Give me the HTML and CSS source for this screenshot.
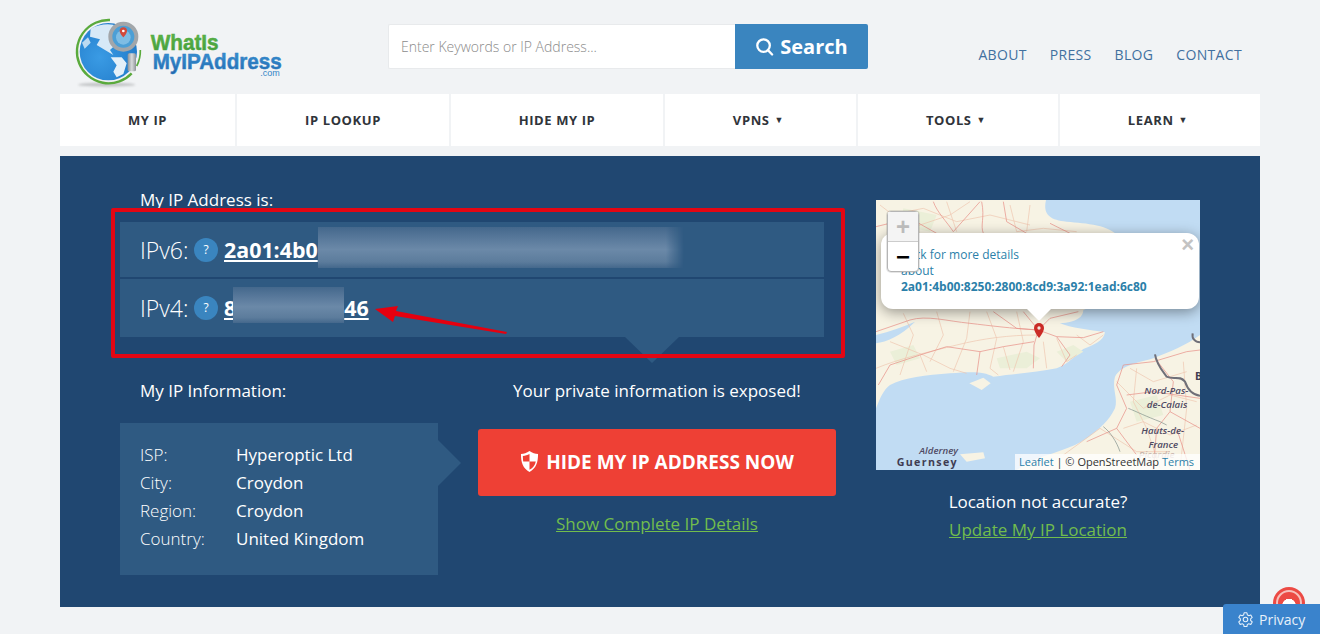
FILE: index.html
```html
<!DOCTYPE html>
<html lang="en">
<head>
<meta charset="utf-8">
<title>What Is My IP Address</title>
<link rel="stylesheet" href="styles.css">
</head>
<body>
<div class="page">
  <header class="header">
    <a class="logo" href="#" aria-label="WhatIsMyIPAddress.com">
      <svg class="logo-svg" viewBox="0 0 690 282">
        <defs>
          <radialGradient id="globe" cx="35%" cy="60%" r="75%"><stop offset="0" stop-color="#3a9be4"/><stop offset="1" stop-color="#2079c8"/></radialGradient>
          <linearGradient id="blueText" x1="0" y1="0" x2="0" y2="1"><stop offset="0" stop-color="#3b95d6"/><stop offset="1" stop-color="#2268ae"/></linearGradient>
          <linearGradient id="greenText" x1="0" y1="0" x2="0" y2="1"><stop offset="0" stop-color="#62b84a"/><stop offset="1" stop-color="#3f9a3c"/></linearGradient>
          <linearGradient id="metal" x1="0" y1="0" x2="1" y2="0"><stop offset="0" stop-color="#8d9297"/><stop offset=".5" stop-color="#d8dadc"/><stop offset="1" stop-color="#8d9297"/></linearGradient>
        </defs>
        <ellipse class="logo-shadow" cx="140" cy="254" rx="86" ry="6"/>
        <path d="M150 60 A95 95 0 1 0 215 220" fill="none" stroke="#5aaa3c" stroke-width="7"/>
        <path d="M241 150 A96 96 0 0 1 230 198" fill="none" stroke="#5aaa3c" stroke-width="5"/>
        <circle cx="145" cy="155" r="86" fill="url(#globe)"/>
        <path d="M92 86 C110 74 140 70 160 74 L182 120 L150 150 L160 165 L135 150 L110 135 L120 118 L90 110 Z" fill="#d7e9f7"/>
        <path d="M152 172 L185 172 L200 190 L190 222 L170 232 L160 215 L170 196 Z" fill="#e4f0f9"/>
        <path d="M66 128 L84 112 L92 128 L74 146 Z" fill="#bcdaf1"/>
        <circle cx="190" cy="110" r="39" fill="#4c9fd6" stroke="#a2a6aa" stroke-width="12"/>
        <circle cx="190" cy="112" r="22" fill="#7fbde4"/>
        <path d="M190 82 a11 11 0 0 1 11 11 c0 8-11 19-11 19 s-11-11-11-19 a11 11 0 0 1 11-11z" fill="#d2493b"/>
        <circle cx="190" cy="93" r="4" fill="#fff"/>
        <rect x="203" y="160" width="25" height="54" rx="5" fill="url(#metal)"/>
        <text class="logo-what" x="272" y="150" textLength="204" lengthAdjust="spacingAndGlyphs" fill="url(#greenText)" stroke="#4ea83f">WhatIs</text>
        <text class="logo-my" x="278" y="208" textLength="387" lengthAdjust="spacingAndGlyphs" fill="url(#blueText)" stroke="#2f80c4">MyIPAddress</text>
        <text class="logo-com" x="601" y="229">.com</text>
      </svg>
    </a>
    <form class="search">
      <input class="search-input" type="text" placeholder="Enter Keywords or IP Address...">
      <button class="search-btn" type="button">
        <svg class="search-icon" viewBox="0 0 20 20"><circle cx="9" cy="9" r="6.6"/><path d="M13.6 13.800 L18 18.400"/></svg>
        Search
      </button>
    </form>
    <nav class="top-links">
      <a href="#">ABOUT</a>
      <a href="#">PRESS</a>
      <a href="#">BLOG</a>
      <a href="#">CONTACT</a>
    </nav>
  </header>

  <nav class="menu">
    <a href="#">MY IP</a>
    <a href="#">IP LOOKUP</a>
    <a href="#">HIDE MY IP</a>
    <a href="#">VPNS<span class="caret">▼</span></a>
    <a href="#">TOOLS<span class="caret">▼</span></a>
    <a href="#">LEARN<span class="caret">▼</span></a>
  </nav>

  <main class="panel">
    <section class="left">
      <h2 class="title title-indent">My IP Address is:</h2>
      <div class="ip-block">
        <div class="ip-row ip-row-six">
          <span class="ip-label">IPv6:</span>
          <span class="help">?</span>
          <a class="ip-value" href="#">2a01:4b0</a><span class="blur blur-six"></span>
        </div>
        <div class="ip-row ip-row-four">
          <span class="ip-label">IPv4:</span>
          <span class="help">?</span>
          <a class="ip-value" href="#">8</a><span class="blur blur-four"></span><a class="ip-value" href="#">46</a>
        </div>
      </div>
      <div class="lower">
        <div>
          <h2 class="title title-indent title-lower">My IP Information:</h2>
          <dl class="info">
            <dt>ISP:</dt><dd>Hyperoptic Ltd</dd>
            <dt>City:</dt><dd>Croydon</dd>
            <dt>Region:</dt><dd>Croydon</dd>
            <dt>Country:</dt><dd>United Kingdom</dd>
          </dl>
        </div>
        <div class="cta">
          <h2 class="title title-cta">Your private information is exposed!</h2>
          <a class="hide-btn" href="#">
            <svg class="shield" viewBox="0 0 20 24"><path d="M10 1 C13 3 16 4 19 4 C19 13 17 19 10 23 C3 19 1 13 1 4 C4 4 7 3 10 1Z" fill="#fff"/><path d="M10 4 L10 12 L3.400 12 C3.200 10 3 8.500 3 6.200 C5.500 6 8 5 10 4Z M10 12 L16.600 12 C16 15.500 13.800 18.800 10 20.800Z" fill="#ee4035"/></svg>
            HIDE MY IP ADDRESS NOW
          </a>
          <a class="green-link" href="#">Show Complete IP Details</a>
        </div>
      </div>
    </section>

    <aside class="right">
      <div class="map">
        <svg class="map-svg" viewBox="18 15 972 810">
          <rect x="18" y="15" width="972" height="810" fill="#c1dcf3"/>
          <path class="land" d="M18 15 L528 15 C520 50 530 75 590 80 C650 85 720 90 745 125 L760 230 L700 320 L640 345 C640 365 620 382 570 385 C600 398 660 405 705 412 C700 440 670 450 640 462 C615 480 600 505 560 520 C500 532 440 535 370 545 C340 528 300 530 240 535 C170 540 100 548 60 570 C40 585 30 610 18 640 L18 445 C50 440 90 425 135 380 C100 395 60 410 18 420 Z"/>
          <path class="land" d="M990 420 C950 450 900 470 850 490 C800 505 755 510 735 545 C725 580 745 610 735 640 C715 680 690 700 650 730 C610 760 540 775 480 800 L440 825 L990 825 Z"/>
          <path class="land" d="M298 565 L340 548 L362 565 L335 585 Z"/>
          <path class="land" d="M270 778 L340 772 L345 790 L290 800 Z"/>
          <path class="green-area" d="M380 490 L470 470 L510 490 L470 520 L390 520 Z M560 470 L610 450 L640 470 L590 500 Z M60 470 L130 450 L150 490 L80 510 Z M780 620 L860 600 L880 660 L800 680 Z M100 40 L200 60 L180 110 L90 90 Z"/>
          <g class="road-thin">
            <path d="M18 520 C90 490 180 470 260 450 C340 430 420 420 500 420"/>
            <path d="M60 440 L160 480 L240 520 L290 535"/>
            <path d="M350 350 L380 430 L360 520 L385 540"/>
            <path d="M440 350 L460 440 L430 530"/>
            <path d="M560 430 L590 500 L620 480"/>
            <path d="M620 420 L660 450 L700 420"/>
            <path d="M200 350 L220 420 L180 500"/>
            <path d="M100 355 L130 420 L90 540"/>
            <path d="M300 350 L290 430 L250 530"/>
            <path d="M60 60 L160 40 L260 80 L360 60 L480 90"/>
            <path d="M30 30 L120 100 L240 60 L300 20"/>
            <path d="M420 30 L440 110 L520 100 L620 110"/>
            <path d="M230 20 L260 110"/>
            <path d="M480 30 L470 110"/>
            <path d="M780 520 L850 560 L950 530"/>
            <path d="M740 560 L820 640 L900 600 L980 620"/>
            <path d="M760 700 L820 680 L900 720 L980 690"/>
            <path d="M580 780 L690 700 L800 770 L900 770"/>
            <path d="M830 700 L870 820"/>
            <path d="M800 520 L790 620 L830 700"/>
            <path d="M940 500 L950 640 L930 820"/>
            <path d="M400 455 L420 525"/>
            <path d="M150 480 L170 530"/>
            <path d="M520 440 L530 520"/>
          </g>
          <g class="road">
            <path d="M190 20 C200 50 230 80 250 110 L330 20"/>
            <path d="M335 20 C345 70 330 90 340 115"/>
            <path d="M18 95 L120 70 L200 115"/>
            <path d="M400 20 L410 80 L470 115"/>
            <path d="M540 85 L600 115"/>
            <path d="M18 410 L120 375 C170 360 230 378 300 385 C360 392 420 400 505 405"/>
            <path d="M505 405 L560 425 L640 428 L700 410"/>
            <path d="M505 405 L440 400 L370 350"/>
            <path d="M505 405 L492 450 L490 520"/>
            <path d="M505 405 L540 370 L625 350"/>
            <path d="M505 405 L460 350"/>
            <path d="M492 440 L400 455 L330 470 L320 540"/>
            <path d="M330 470 L230 455 L150 480 L60 510 L25 570"/>
            <path d="M560 425 L600 480 L575 515"/>
            <path d="M760 510 L740 570 L770 640 L740 700 L650 740"/>
            <path d="M855 490 L910 560 L900 650 L860 700 L850 825"/>
            <path d="M760 510 L850 500 L950 470 L990 465"/>
            <path d="M770 600 L850 590 L990 610"/>
            <path d="M900 650 L990 700"/>
            <path d="M740 700 L800 780"/>
            <path d="M920 700 L960 825"/>
          </g>
          <path class="border-line" d="M855 478 C860 510 880 530 890 545 C910 555 930 540 945 560 C955 590 970 600 990 602"/>
          <path class="border-line" d="M968 415 C965 430 975 442 990 442"/>
          <path class="river" d="M700 695 C720 710 740 740 750 770"/>
          <path class="river" d="M775 640 C800 650 830 665 870 680 L890 690"/>
          <text class="map-region" x="889" y="597" text-anchor="middle">Nord-Pas-</text>
          <text class="map-region" x="891" y="640" text-anchor="middle">de-Calais</text>
          <text class="map-region" x="878" y="716" text-anchor="middle">Hauts-de-</text>
          <text class="map-region" x="880" y="758" text-anchor="middle">France</text>
          <text class="map-region map-faint" x="860" y="790" text-anchor="middle">Picardie</text>
          <text class="map-region" x="206" y="778" text-anchor="middle">Alderney</text>
          <text class="map-place" x="172" y="812" text-anchor="middle">Guernsey</text>
          <text class="map-place" x="975" y="556">B</text>
          <g>
            <path d="M507 384 a15 15 0 0 1 15 15 c0 12-15 30-15 30 s-15-18-15-30 a15 15 0 0 1 15-15z" fill="#cb2b26"/>
            <circle cx="507" cy="399" r="5" fill="#f6e5dc"/>
          </g>
        </svg>
        <div class="popup">
          <a href="#">Click for more details<br>about<br><b>2a01:4b00:8250:2800:8cd9:3a92:1ead:6c80</b></a>
          <span class="popup-close">×</span>
          <span class="popup-tip"></span>
        </div>
        <div class="zoom-ctl">
          <span class="zoom-in">+</span>
          <span class="zoom-out">−</span>
        </div>
        <div class="attrib"><a href="#">Leaflet</a> | © OpenStreetMap <a href="#">Terms</a></div>
      </div>
      <p class="loc-q">Location not accurate?</p>
      <a class="green-link" href="#">Update My IP Location</a>
    </aside>

    <div class="annotation">
      <svg class="arrow" viewBox="0 0 150 40">
        <path d="M136 28 L25 7 L27 2 L4 5 L22 18 L24 12 L135 30 Z" fill="#e5000f"/>
      </svg>
    </div>
  </main>
</div>
<span class="notify"><span class="notify-bell"></span></span>
<a class="privacy" href="#">
  <svg class="gear" viewBox="0 0 24 24"><circle cx="12" cy="12" r="3.200"/><path d="M10 2.500 h4 l.6 3 a7 7 0 0 1 2 1.100 l2.900-1 2 3.500-2.300 2 a7 7 0 0 1 0 2.300 l2.300 2-2 3.500-2.900-1 a7 7 0 0 1-2 1.100 l-.6 3 h-4 l-.6-3 a7 7 0 0 1-2-1.100 l-2.900 1-2-3.500 2.300-2 a7 7 0 0 1 0-2.300 l-2.300-2 2-3.500 2.900 1 a7 7 0 0 1 2-1.100z"/></svg>
  Privacy
</a>
</body>
</html>
```
FILE: styles.css
```css
* { box-sizing: border-box; }
html, body { margin: 0; padding: 0; height: 100%; overflow: hidden; }
body { background: #f1f3f5; font-family: "Open Sans", "Liberation Sans", sans-serif; color: #fff; }
a { text-decoration: none; color: inherit; }
.page { width: 1200px; margin: 0 auto; }

/* Header */
.header { display: flex; height: 94px; }
.logo { display: block; width: 230px; height: 94px; }
.logo-svg { display: block; width: 230px; height: 94px; }
.logo-shadow { fill: #c4c6c8; filter: blur(3px); }
.logo-what, .logo-my { font-family: "Liberation Sans", sans-serif; font-weight: 700; font-size: 66px; stroke-width: 1.500; }
.logo-com { font-family: "Liberation Sans", sans-serif; font-size: 27px; fill: #3385c6; }

.search { display: flex; margin: 24px 0 0 98px; height: 45px; }
.search-input { width: 347px; height: 45px; padding: 0 12px; border: 1px solid #e8eaec; border-right: 0; background: #fff; font: 300 14px "Open Sans", sans-serif; color: #555; outline: 0; border-radius: 2px 0 0 2px; }
.search-input::placeholder { color: #8b8b8b; opacity: 1; }
.search-btn { display: flex; align-items: center; justify-content: center; gap: 6px; width: 133px; height: 45px; border: 0; background: #3a85bf; color: #fff; font: 700 20px "Open Sans", sans-serif; border-radius: 0 2px 2px 0; padding: 0 0 1px; }
.search-icon { width: 19px; height: 19px; fill: none; stroke: #fff; stroke-width: 2.400; stroke-linecap: round; }

.top-links { display: flex; gap: 23px; margin: 45px 18px 0 auto; font-size: 14px; line-height: 20px; color: #41709f; letter-spacing: .33px; }

/* Menu */
.menu { display: grid; grid-template-columns: 175px 212px 212px 191px 200px 200px; column-gap: 2px; height: 52px; }
.menu a { display: flex; align-items: center; justify-content: center; background: #fff; color: #30343a; font-size: 13px; font-weight: 700; letter-spacing: .6px; }
.caret { font-size: 9px; margin: 0 4px 1px 5px; }

/* Panel */
.panel { position: relative; display: grid; grid-template-columns: 716px 324px; column-gap: 40px; height: 451px; margin-top: 10px; padding: 33px 60px 0; background: #204771; }
.title { margin: 0; font-size: 17px; font-weight: 400; line-height: 22px; color: #fff; }
.title-indent { padding-left: 20px; }
.title-lower { margin-bottom: 21px; }
.title-cta { text-align: center; margin-bottom: 27px; }

.ip-block { position: relative; width: 704px; margin-top: 11px; }
.ip-block::after { content: ""; position: absolute; left: 505px; top: 100%; border-style: solid; border-width: 26px 27px 0; border-color: #2f5a82 transparent transparent; }
.ip-row { display: flex; align-items: center; padding-left: 20px; background: #2f5a82; }
.ip-row-six { height: 55px; margin-bottom: 2px; }
.ip-row-four { height: 58px; }
.ip-label { font-size: 23px; font-weight: 300; line-height: 30px; width: 49px; }
.help { flex: none; width: 24px; height: 24px; margin: 0 6px 0 5px; border-radius: 50%; background: #3a85bf; text-align: center; font-size: 12px; line-height: 24px; }
.ip-value { font-size: 21.4px; font-weight: 700; text-decoration: underline; line-height: 30px; }
.blur { flex: none; background: linear-gradient(180deg, #44688c 0, #5a7a9c 30%, #6b89a8 55%, #5c7c9c 85%, #44688c 100%); }
.blur-six { width: 366px; height: 41px; margin-bottom: 4px; -webkit-mask-image: linear-gradient(90deg, #000 95%, transparent); mask-image: linear-gradient(90deg, #000 95%, transparent); }
.blur-four { width: 111px; height: 36px; margin: 0 0 6px -3px; }

.lower { display: grid; grid-template-columns: 318px 358px; column-gap: 40px; margin-top: 43px; }
.info { position: relative; display: grid; grid-template-columns: 96px 1fr; grid-auto-rows: 28px; height: 152px; margin: 0; padding: 18px 20px 0; background: #2f5a82; font-size: 17px; line-height: 28px; }
.info::after { content: ""; position: absolute; left: 100%; top: 17px; border-style: solid; border-width: 23px 0 23px 23px; border-color: transparent transparent transparent #2f5a82; }
.info dt { font-weight: 300; }
.info dd { margin: 0; }

.cta { display: flex; flex-direction: column; align-items: center; }
.cta .title-cta { width: 100%; }
.hide-btn { display: flex; align-items: center; justify-content: center; gap: 7px; width: 358px; height: 67px; margin-bottom: 17px; padding-bottom: 2px; border-radius: 3px; background: #ee4035; color: #fff; font-size: 19px; font-weight: 700; }
.shield { width: 19px; height: 23px; }
.green-link { color: #72bd4d; font-size: 17px; line-height: 22px; text-decoration: underline; }

/* Map column */
.right { display: flex; flex-direction: column; align-items: center; padding-top: 11px; }
.map { position: relative; width: 324px; height: 270px; overflow: hidden; background: #c1dcf3; }
.map-svg { display: block; width: 324px; height: 270px; }
.land { fill: #f7f3e4; }
.green-area { fill: #ebefd8; }
.road-thin path { fill: none; stroke: #efc4ae; stroke-width: 2; }
.road path { fill: none; stroke: #e8938a; stroke-width: 2.200; }
.border-line { fill: none; stroke: #6f6f78; stroke-width: 6; }
.river { fill: none; stroke: #7d8d88; stroke-width: 2; }
.map-region { font: italic 600 29px "Open Sans", sans-serif; fill: #4f4a63; }
.map-faint { fill: #c9b5ad; }
.map-place { font: 700 32px "Open Sans", sans-serif; fill: #403c52; letter-spacing: 4px; }

.popup { position: absolute; left: 5px; top: 33px; width: 318px; height: 76px; padding: 14px 20px; background: #fff; border-radius: 12px; box-shadow: 0 3px 14px rgba(0,0,0,.4); color: #2b7fa9; font-size: 12px; line-height: 16px; }
.popup b { font-weight: 700; }
.popup-close { position: absolute; right: 5px; top: 1px; color: #c3c3c3; font: 700 22px/22px "Liberation Sans", sans-serif; }
.popup-tip { position: absolute; left: 146px; top: 100%; width: 0; height: 0; border-style: solid; border-width: 12px 12px 0; border-color: #fff transparent transparent; }
.zoom-ctl { position: absolute; left: 11px; top: 11px; display: flex; flex-direction: column; width: 32px; height: 61px; border-radius: 4px; border: 1px solid #b5b5b5; box-shadow: 0 0 0 1px rgba(0,0,0,.1); background: #fff; color: #000; text-align: center; font: 700 24px/30px "Liberation Sans", sans-serif; }
.zoom-in { height: 30px; background: #f4f4f4; color: #bbb; border-bottom: 1px solid #ccc; }
.zoom-out { height: 29px; }
.attrib { position: absolute; right: 0; bottom: 0; padding: 0 4px; width: 185px; height: 16px; background: rgba(255,255,255,.75); color: #333; font-size: 11px; line-height: 16px; white-space: nowrap; }
.attrib a { color: #2b7fa9; }

.loc-q { margin: 21px 0 6px; font-size: 17px; line-height: 22px; }

/* Annotation */
.annotation { position: absolute; left: 51px; top: 52px; width: 734px; height: 150px; border: 4px solid #e30613; border-radius: 2px; pointer-events: none; }
.arrow { position: absolute; left: 256px; top: 92px; width: 150px; height: 40px; }

/* Fixed corner widgets */
.notify { position: absolute; left: 1273px; top: 587px; width: 32px; height: 32px; border-radius: 50%; background: #ec4a44; }
.notify-bell { position: absolute; left: 3px; top: 3px; width: 26px; height: 26px; border-radius: 50%; border: 2px solid #f7c0bb; background: radial-gradient(circle at 50% 62%, #fff 0, #fff 38%, transparent 40%); }
.privacy { position: absolute; right: 0; bottom: 0; display: flex; align-items: center; gap: 5px; width: 97px; height: 30px; padding-left: 14px; background: #3a83cc; border-radius: 3px 0 0 0; color: #e8f1fa; font-size: 14px; }
.gear { width: 17px; height: 17px; fill: none; stroke: #e8f1fa; stroke-width: 1.500; stroke-linejoin: round; }
```
